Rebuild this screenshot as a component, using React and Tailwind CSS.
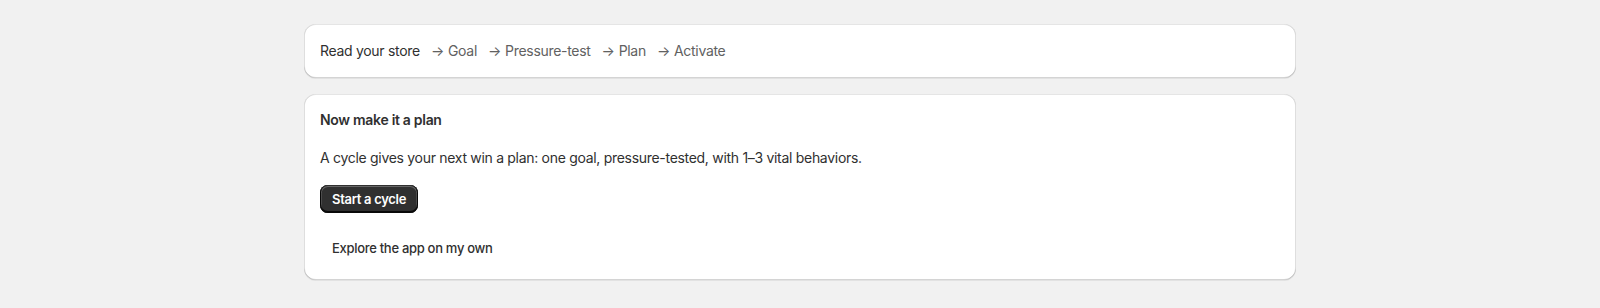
export default function App() {
  const steps = ["Goal", "Pressure-test", "Plan", "Activate"];
  const card =
    "bg-white rounded-[12px] shadow-[0_1px_0_0_rgba(26,26,26,0.07),0_1px_0_0_rgba(204,204,204,0.5)_inset,0_-1px_0_0_rgba(0,0,0,0.17)_inset,-1px_0_0_0_rgba(0,0,0,0.13)_inset,1px_0_0_0_rgba(0,0,0,0.13)_inset]";
  return (
    <div
      className="min-h-[308px] bg-[#f1f1f1] flex justify-center pt-[24px] pb-[28px] tracking-[-0.3px]"
      style={{ fontFamily: "Inter, 'Noto Sans', sans-serif" }}
    >
      <div className="w-[992px] flex flex-col gap-[16px]">
        <div className={`${card} px-[16px] h-[54px] flex items-center gap-[11px] text-[14px] leading-[20px]`}>
          <span className="text-[#303030]">Read your store</span>
          {steps.map((s) => (
            <span key={s} className="text-[#616161] flex items-center">
              <span className="mr-[4px]">→</span>
              {s}
            </span>
          ))}
        </div>
        <div className={`${card} pt-[16px] pb-[18px] px-[16px] flex flex-col items-start`}>
          <h2 className="text-[14px] leading-[20px] font-semibold text-[#303030]">Now make it a plan</h2>
          <p className="mt-[16px] text-[14px] leading-[24px] text-[#303030]">
            A cycle gives your next win a plan: one goal, pressure-tested, with 1–3 vital behaviors.
          </p>
          <button className="mt-[15px] h-[28px] px-[12px] rounded-[8px] bg-[#303030] text-white text-[13px] font-semibold leading-[20px] shadow-[0_-1px_0_1px_rgba(0,0,0,0.8)_inset,0_0_0_1px_#303030_inset,0_0.5px_0_1.5px_#666_inset]">
            Start a cycle
          </button>
          <button className="mt-[21px] h-[28px] px-[12px] rounded-[8px] text-[#303030] text-[13px] font-medium leading-[20px]">
            Explore the app on my own
          </button>
        </div>
      </div>
    </div>
  );
}
